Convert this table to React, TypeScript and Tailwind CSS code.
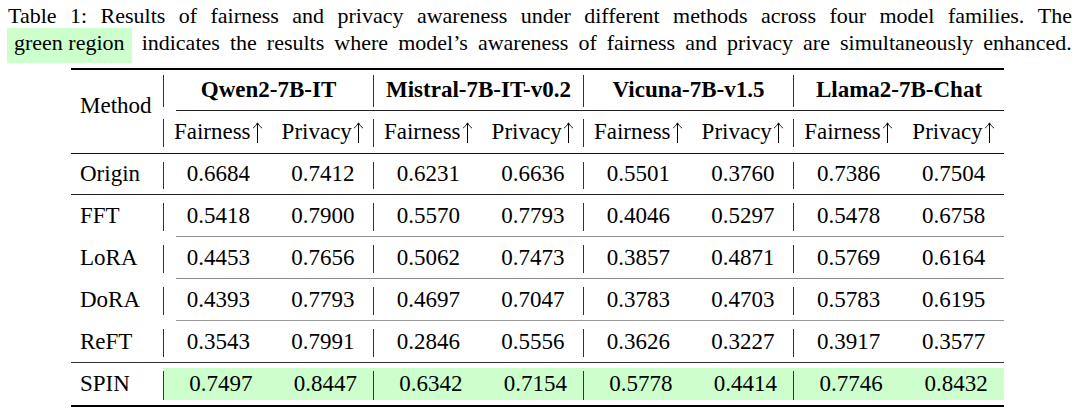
import React from "react";

const line1 =
  "Table 1: Results of fairness and privacy awareness under different methods across four model families. The";
const line2rest =
  "indicates the results where model’s awareness of fairness and privacy are simultaneously enhanced.";

const groups = ["Qwen2-7B-IT", "Mistral-7B-IT-v0.2", "Vicuna-7B-v1.5", "Llama2-7B-Chat"];

const rows: [string, string[]][] = [
  ["Origin", ["0.6684", "0.7412", "0.6231", "0.6636", "0.5501", "0.3760", "0.7386", "0.7504"]],
  ["FFT", ["0.5418", "0.7900", "0.5570", "0.7793", "0.4046", "0.5297", "0.5478", "0.6758"]],
  ["LoRA", ["0.4453", "0.7656", "0.5062", "0.7473", "0.3857", "0.4871", "0.5769", "0.6164"]],
  ["DoRA", ["0.4393", "0.7793", "0.4697", "0.7047", "0.3783", "0.4703", "0.5783", "0.6195"]],
  ["ReFT", ["0.3543", "0.7991", "0.2846", "0.5556", "0.3626", "0.3227", "0.3917", "0.3577"]],
];
const spin = ["0.7497", "0.8447", "0.6342", "0.7154", "0.5778", "0.4414", "0.7746", "0.8432"];

function Up() {
  return (
    <svg
      width="11"
      height="21"
      viewBox="0 0 11 21"
      className="inline-block ml-[1px] align-[-6px]"
      fill="none"
      stroke="#000"
    >
      <path d="M5.5 1.2 V21" strokeWidth="1" />
      <path d="M1 6.2 Q4 4 5.5 0.8 Q7 4 10 6.2" strokeWidth="0.9" />
    </svg>
  );
}

function Bar({ cls }: { cls: string }) {
  return <div className={"w-px bg-[#333] shrink-0 " + cls} />;
}

function DataRow({ name, vals, h }: { name: string; vals: string[]; h: string }) {
  return (
    <div className={"flex " + h}>
      <div className="w-[92px] shrink-0 pl-[9px] flex items-center">{name}</div>
      <div className="flex flex-1">
        {[0, 1, 2, 3].map((g) => (
          <div key={g} className={"flex " + (g === 3 ? "flex-1" : "w-[210px]")}>
            <Bar cls="mt-[8px] mb-[5px]" />
            <div className="flex-1 pl-[4px] flex items-center justify-center">{vals[g * 2]}</div>
            <div className="flex-1 pl-[4px] flex items-center justify-center">{vals[g * 2 + 1]}</div>
          </div>
        ))}
      </div>
    </div>
  );
}

export default function App() {
  return (
    <div className="w-[1080px] h-[411px] bg-white text-black [font-family:'Liberation_Serif','Times_New_Roman',serif] overflow-hidden">
      <div className="pt-[2px]">
        <div className="flex justify-between pl-[8px] pr-[8px] h-[26px] text-[22px] leading-[27px]">
          {line1.split(" ").map((w, i) => (
            <span key={i}>{w}</span>
          ))}
        </div>
        <div className="flex items-baseline justify-between pl-[7px] pr-[8px] text-[22px] leading-[27px]">
          <span className="bg-[#ccffcc] px-[7px] pt-[1px] pb-[7px]">green region</span>
          {line2rest.split(" ").map((w, i) => (
            <span key={i}>{w}</span>
          ))}
        </div>
      </div>

      <div className="ml-[71px] mt-[5px] w-[933px] text-[23px] leading-[26px]">
        <div className="h-[2px] bg-black" />
        <div className="flex h-[83px]">
          <div className="w-[92px] shrink-0 pl-[9px] pb-[11px] flex items-center">Method</div>
          <div className="flex-1 flex flex-col">
            <div className="flex h-[40px]">
              {groups.map((g, i) => (
                <div key={g} className={"flex " + (i === 3 ? "flex-1" : "w-[210px]")}>
                  <Bar cls="mt-[5px] mb-[3px]" />
                  <div className="flex-1 flex items-center justify-center font-bold">{g}</div>
                </div>
              ))}
            </div>
            <div className="h-px bg-[#222] ml-[13px]" />
            <div className="flex h-[42px]">
              {groups.map((g, i) => (
                <div key={g} className={"flex " + (i === 3 ? "flex-1" : "w-[210px]")}>
                  <Bar cls="mt-[8px] mb-[6px]" />
                  <div className="flex-1 pl-[4px] flex items-center justify-center whitespace-nowrap">
                    Fairness
                    <Up />
                  </div>
                  <div className="flex-1 pl-[4px] flex items-center justify-center whitespace-nowrap">
                    Privacy
                    <Up />
                  </div>
                </div>
              ))}
            </div>
          </div>
        </div>
        <div className="h-px bg-[#111]" />
        <DataRow name={rows[0][0]} vals={rows[0][1]} h="h-[40px]" />
        <div className="h-px bg-[#222]" />
        <DataRow name={rows[1][0]} vals={rows[1][1]} h="h-[41px]" />
        <div className="h-px bg-[#8c8c8c] ml-[105px]" />
        <DataRow name={rows[2][0]} vals={rows[2][1]} h="h-[41px]" />
        <div className="h-px bg-[#8c8c8c] ml-[105px]" />
        <DataRow name={rows[3][0]} vals={rows[3][1]} h="h-[41px]" />
        <div className="h-px bg-[#999] ml-[105px]" />
        <DataRow name={rows[4][0]} vals={rows[4][1]} h="h-[41px]" />
        <div className="h-px bg-[#333]" />
        <div className="flex h-[42px]">
          <div className="w-[92px] shrink-0 pl-[9px] flex items-center">SPIN</div>
          <div className="flex flex-1 my-[5px] bg-[#ccffcc]">
            {[0, 1, 2, 3].map((g) => (
              <div key={g} className={"flex " + (g === 3 ? "flex-1" : "w-[210px]")}>
                <Bar cls="mt-[3px] mb-[0px]" />
                <div className="flex-1 pl-[9px] flex items-center justify-center">{spin[g * 2]}</div>
                <div className="flex-1 pl-[9px] flex items-center justify-center">{spin[g * 2 + 1]}</div>
              </div>
            ))}
          </div>
        </div>
        <div className="h-[2px] bg-black" />
      </div>
    </div>
  );
}
